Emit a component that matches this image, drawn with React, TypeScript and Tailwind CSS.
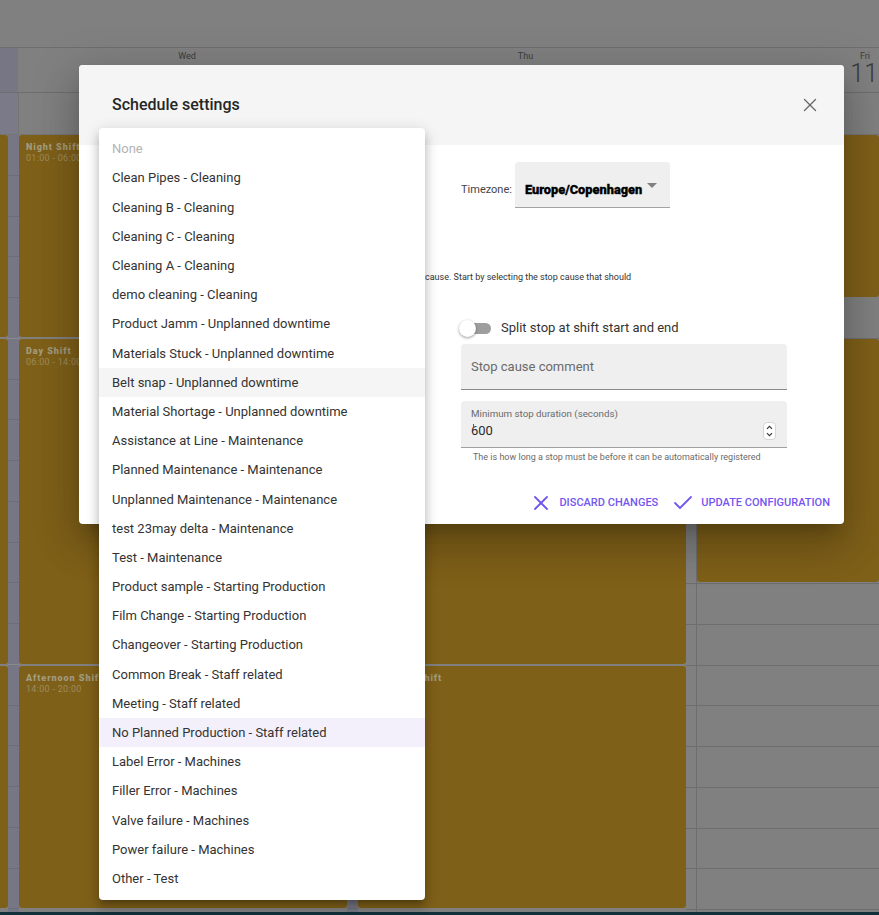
import { Check, X } from "lucide-react";

const causes = [
  "Clean Pipes - Cleaning",
  "Cleaning B - Cleaning",
  "Cleaning C - Cleaning",
  "Cleaning A - Cleaning",
  "demo cleaning - Cleaning",
  "Product Jamm - Unplanned downtime",
  "Materials Stuck - Unplanned downtime",
  "Belt snap - Unplanned downtime",
  "Material Shortage - Unplanned downtime",
  "Assistance at Line - Maintenance",
  "Planned Maintenance - Maintenance",
  "Unplanned Maintenance - Maintenance",
  "test 23may delta - Maintenance",
  "Test - Maintenance",
  "Product sample - Starting Production",
  "Film Change - Starting Production",
  "Changeover - Starting Production",
  "Common Break - Staff related",
  "Meeting - Staff related",
  "No Planned Production - Staff related",
  "Label Error - Machines",
  "Filler Error - Machines",
  "Valve failure - Machines",
  "Power failure - Machines",
  "Other - Test",
];

function Shift({ title, time, className }: { title: string; time: string; className: string }) {
  return (
    <div className={`rounded-[3px] bg-[#7f6019] pl-[7px] pt-[6px] ${className}`}>
      <div className="text-[9px] font-black leading-[12px] tracking-[0.95px] text-[#a39b7e]">{title}</div>
      <div className="text-[9px] leading-[11px] tracking-[0.3px] text-[#9c8c5c]">{time}</div>
    </div>
  );
}

function Gutter() {
  return (
    <div className="flex flex-col bg-[#767684]">
      {Array.from({ length: 19 }).map((_, i) => (
        <div
          key={i}
          className={`h-[40.75px] shrink-0 border-b ${i === 4 || i === 12 ? "border-[#8a8a8a]" : "border-[#6d6d7a]"}`}
        />
      ))}
    </div>
  );
}

function HourRows() {
  return (
    <div className="border-b border-[#6e6e6e]">
      {Array.from({ length: 8 }).map((_, i) => (
        <div key={i} className="h-[40.75px] border-t border-[#6e6e6e]" />
      ))}
    </div>
  );
}

export default function App() {
  return (
    <div className="relative flex h-[915px] w-[879px] flex-col overflow-hidden bg-[#808080] font-['Roboto',sans-serif]">
      <div className="h-[48px] shrink-0 border-b border-[#6e6e6e]" />

      <div className="grid h-[45px] shrink-0 grid-cols-[18px_338px_339px_184px] border-b border-[#6e6e6e] text-[#3c3c3c]">
        <div className="bg-[#767684]" />
        <div className="pt-[2px] text-center text-[9px] leading-[12px]">Wed</div>
        <div className="pt-[2px] text-center text-[9px] leading-[12px]">Thu</div>
        <div className="relative pr-[9px] pt-[2px] text-right text-[9px] leading-[12px]">
          Fri
          <div className="absolute right-[1px] top-[15px] text-[25px] font-light leading-[22px] text-[#3a3a3a]">11</div>
        </div>
      </div>

      <div className="grid h-[42px] shrink-0 grid-cols-[19px_1fr] border-b border-[#747474]">
        <div className="border-r border-[#747474] bg-[#7a7a88]" />
        <div />
      </div>

      <div className="grid h-[777px] shrink-0 grid-cols-[8px_11px_328px_11px_328px_11px_182px] overflow-hidden bg-[#808080]">
        <div className="flex flex-col gap-[2px]">
          <div className="h-[202px] rounded-r-[3px] bg-[#7f6019]" />
          <div className="h-[325px] rounded-r-[3px] bg-[#7f6019]" />
          <div className="h-[242px] rounded-r-[3px] bg-[#7f6019]" />
        </div>
        <Gutter />
        <div className="flex flex-col gap-[2px]">
          <Shift title="Night Shift" time="01:00  -  06:00" className="h-[202px]" />
          <Shift title="Day Shift" time="06:00  -  14:00" className="h-[325px]" />
          <Shift title="Afternoon Shift" time="14:00  -  20:00" className="h-[242px]" />
        </div>
        <Gutter />
        <div className="flex flex-col gap-[2px]">
          <Shift title="Night Shift" time="01:00  -  06:00" className="h-[202px]" />
          <Shift title="Day Shift" time="06:00  -  14:00" className="h-[325px]" />
          <Shift title="Afternoon Shift" time="14:00  -  20:00" className="h-[242px]" />
        </div>
        <div className="flex flex-col border-r border-[#6e6e6e]">
          <div className="h-[448px] shrink-0" />
          <HourRows />
        </div>
        <div className="flex flex-col">
          <Shift title="Night Shift" time="01:00  -  06:00" className="h-[162px] shrink-0" />
          <div className="h-[42px] shrink-0 border-b border-[#6e6e6e]" />
          <Shift title="Day Shift" time="06:00  -  14:00" className="h-[243px] shrink-0" />
          <div className="h-px shrink-0" />
          <HourRows />
        </div>
      </div>

      <div className="h-[3px] shrink-0 bg-[#12303a]" />

      <div className="absolute left-[79px] top-[65px] h-[459px] w-[765px] overflow-hidden rounded-[4px] bg-white shadow-[0_11px_15px_-7px_rgba(0,0,0,0.2),0_24px_38px_3px_rgba(0,0,0,0.14),0_9px_46px_8px_rgba(0,0,0,0.12)]">
        <div className="flex h-[80px] items-center justify-between bg-[#f5f5f5] pl-[33px] pr-[23px]">
          <h2 className="text-[16px] font-medium leading-[24px] text-[#262626]">Schedule settings</h2>
          <X className="h-[22px] w-[22px] text-[#666666]" strokeWidth={1.4} />
        </div>

        <div className="flex pl-[382px] pt-[17px]">
          <span className="mr-[3px] mt-[21px] text-[11px] leading-[14px] text-[#444444]">Timezone:</span>
          <div className="relative h-[46px] w-[155px] rounded-t-[4px] border-b border-[#a3a3a3] bg-[#efefef] pl-[10px] pt-[20px] text-[12.8px] font-black leading-[16px] text-black [-webkit-text-stroke:0.3px_black]">
            Europe/Copenhagen
            <span className="absolute right-[13px] top-[21px] h-0 w-0 border-x-[5px] border-t-[5px] border-x-transparent border-t-[#808080]" />
          </div>
        </div>

        <p className="ml-[346px] mt-[63px] text-[9px] leading-[12px] text-[#333333]">
          cause. Start by selecting the stop cause that should
        </p>

        <div className="ml-[382px] w-[326px]">
          <div className="mt-[33px] flex h-[24px] items-center text-[13px] text-[#333333]">
            <div className="relative ml-[1px] h-[11px] w-[29px] rounded-full bg-[#9e9e9e]">
              <div className="absolute left-[-3px] top-[-3px] h-[17px] w-[17px] rounded-full bg-white shadow-[0_1px_3px_rgba(0,0,0,0.4)]" />
            </div>
            <span className="ml-[10px]">Split stop at shift start and end</span>
          </div>

          <div className="mt-[4px] flex h-[46px] items-center rounded-t-[4px] border-b border-[#8b8b8b] bg-[#efefef] pl-[10px] text-[13px] text-[#6a6a6a]">
            Stop cause comment
          </div>

          <div className="relative mt-[11px] h-[47px] rounded-t-[4px] border-b border-[#a0a0a0] bg-[#efefef] pl-[10px] pt-[6px]">
            <div className="text-[9.75px] leading-[13px] text-[#6a6a6a]">Minimum stop duration (seconds)</div>
            <div className="mt-[1px] text-[13px] leading-[20px] text-[#2a2a2a]">600</div>
            <div className="absolute left-[12px] top-[23px] h-[4px] w-px bg-[#555555]" />
            <div className="absolute right-[11px] top-[21px] flex h-[18px] w-[13px] flex-col items-center justify-center rounded-[4px] border border-[#d5d5d5] bg-white">
              <svg viewBox="0 0 13 18" className="h-[16px] w-[11px]" fill="none" stroke="#333333" strokeWidth="1.3">
                <path d="M3.5 6.5 6.5 3.5l3 3M3.5 11.5l3 3 3-3" />
              </svg>
            </div>
          </div>

          <p className="mt-[3px] pl-[12px] text-[9px] leading-[12px] text-[#6a6a6a]">
            The is how long a stop must be before it can be automatically registered
          </p>
        </div>

        <div className="mt-[28px] flex h-[24px] items-center justify-end pr-[14px] text-[11px] font-medium text-[#7356ef]">
          <X className="mr-[6px] h-[24px] w-[24px]" strokeWidth={1.8} />
          <span>DISCARD CHANGES</span>
          <Check className="ml-[13px] mr-[6px] h-[24px] w-[24px]" strokeWidth={1.8} />
          <span>UPDATE CONFIGURATION</span>
        </div>
      </div>

      <div className="absolute left-[99px] top-[128px] w-[326px] rounded-[4px] bg-white pb-[6.4px] pt-[6px] text-[13px] text-[#333333] shadow-[0_5px_5px_-3px_rgba(0,0,0,0.2),0_8px_10px_1px_rgba(0,0,0,0.14),0_3px_14px_2px_rgba(0,0,0,0.12)]">
        <div className="flex h-[29.6px] items-center pl-[13px] text-[#b3b3b3]">None</div>
        {causes.map((c) => (
          <div
            key={c}
            className={`flex h-[29.2px] items-center pl-[13px] ${
              c.startsWith("Belt snap") ? "bg-[#f5f5f5]" : c.startsWith("No Planned") ? "bg-[#f3f0fb]" : ""
            }`}
          >
            {c}
          </div>
        ))}
      </div>
    </div>
  );
}
